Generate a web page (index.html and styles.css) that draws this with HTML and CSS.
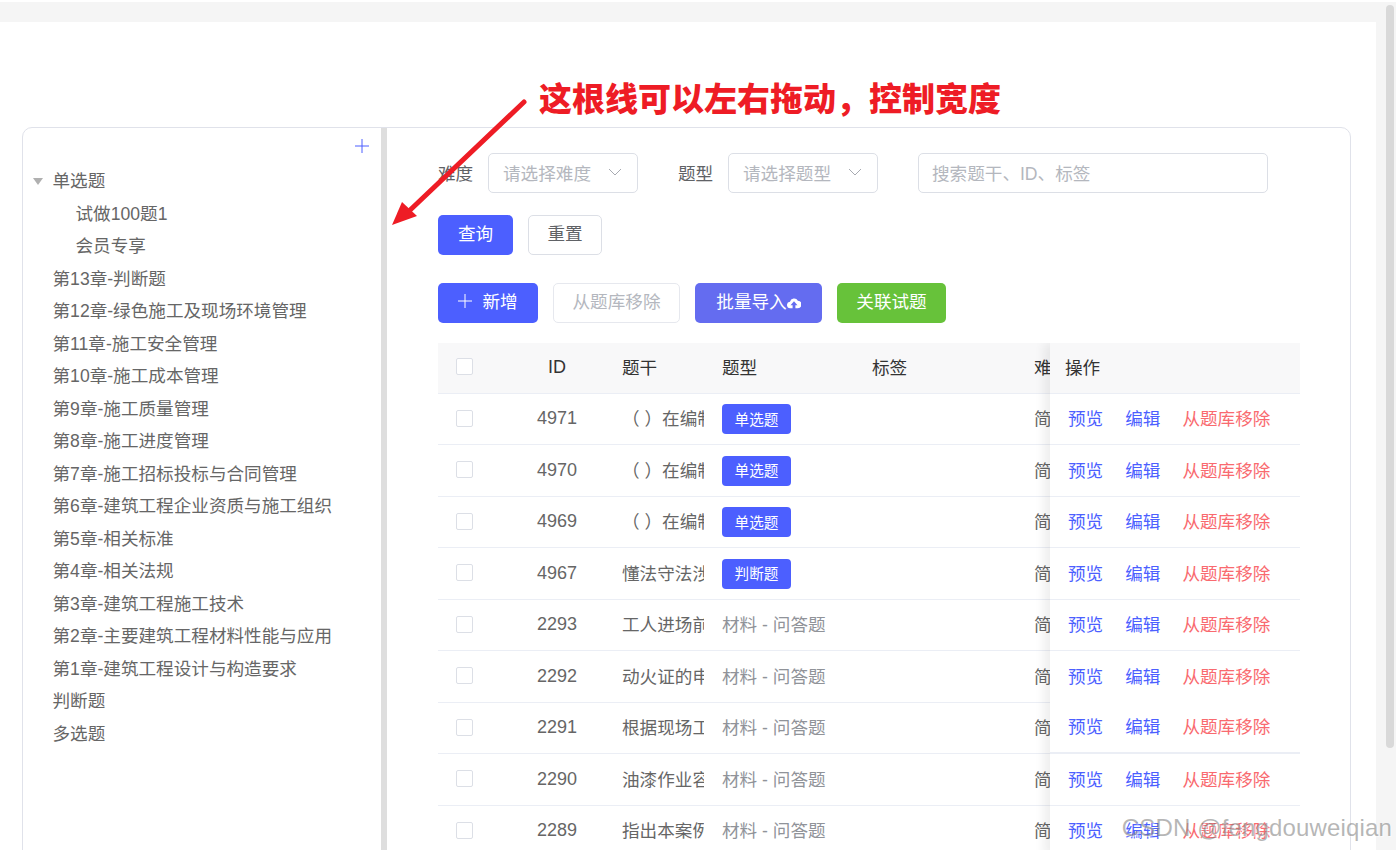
FILE: index.html
```html
<!DOCTYPE html>
<html lang="zh-CN">
<head>
    <meta charset="UTF-8">
    <title>题库管理</title>
    <link rel="stylesheet" href="styles.css">
</head>
<body>
    <div class="top-strip"></div>
    <div class="page">
        <div class="card">
            <div class="panel">
                <div class="tree">
                    <div class="tree-head">
                        <svg class="tree-add" width="16" height="16" viewBox="0 0 16 16"><path d="M8 1v14M1 8h14" stroke="#4c5fff" stroke-width="1" fill="none"/></svg>
                    </div>
                    <div class="tree-row"><span class="caret"></span>单选题</div>
                    <div class="tree-row child">试做100题1</div>
                    <div class="tree-row child">会员专享</div>
                    <div class="tree-row">第13章-判断题</div>
                    <div class="tree-row">第12章-绿色施工及现场环境管理</div>
                    <div class="tree-row">第11章-施工安全管理</div>
                    <div class="tree-row">第10章-施工成本管理</div>
                    <div class="tree-row">第9章-施工质量管理</div>
                    <div class="tree-row">第8章-施工进度管理</div>
                    <div class="tree-row">第7章-施工招标投标与合同管理</div>
                    <div class="tree-row">第6章-建筑工程企业资质与施工组织</div>
                    <div class="tree-row">第5章-相关标准</div>
                    <div class="tree-row">第4章-相关法规</div>
                    <div class="tree-row">第3章-建筑工程施工技术</div>
                    <div class="tree-row">第2章-主要建筑工程材料性能与应用</div>
                    <div class="tree-row">第1章-建筑工程设计与构造要求</div>
                    <div class="tree-row">判断题</div>
                    <div class="tree-row">多选题</div>
                </div>
                <div class="splitter"></div>
                <div class="content">
                    <div class="filters">
                        <div class="filter-item">
                            <label>难度</label>
                            <div class="select">
                                <span>请选择难度</span>
                                <svg width="14" height="14" viewBox="0 0 14 14"><path d="M1 4l6 6 6-6" stroke="#a8abb2" stroke-width="1" fill="none"/></svg>
                            </div>
                        </div>
                        <div class="filter-item">
                            <label>题型</label>
                            <div class="select">
                                <span>请选择题型</span>
                                <svg width="14" height="14" viewBox="0 0 14 14"><path d="M1 4l6 6 6-6" stroke="#a8abb2" stroke-width="1" fill="none"/></svg>
                            </div>
                        </div>
                        <div class="search">搜索题干、ID、标签</div>
                    </div>
                    <div class="btn-row query-row">
                        <button type="button" class="btn primary query">查询</button>
                        <button type="button" class="btn reset">重置</button>
                    </div>
                    <div class="btn-row action-row">
                        <button type="button" class="btn primary add">
                            <svg width="14" height="14" viewBox="0 0 14 14"><path d="M7 0v14M0 7h14" stroke="#fff" stroke-width="1" fill="none"/></svg>
                            新增
                        </button>
                        <button type="button" class="btn disabled">从题库移除</button>
                        <button type="button" class="btn import">批量导入<svg width="14" height="14" viewBox="0 0 16 16"><path fill="#fff" d="M4 14a3.700 3.700 0 0 1-.6-7.400A4.800 4.800 0 0 1 12.400 5.400 4.300 4.300 0 0 1 12 14H9.600v-3.400H12L8 6 4 10.600h2.400V14z"/></svg></button>
                        <button type="button" class="btn link-btn">关联试题</button>
                    </div>
                    <div class="table">
                        <div class="table-main">
                            <div class="row head">
                                <div class="cell check"><span class="box"></span></div>
                                <div class="cell id">ID</div>
                                <div class="cell stem">题干</div>
                                <div class="cell type">题型</div>
                                <div class="cell tags">标签</div>
                                <div class="cell level">难度</div>
                            </div>
                            <div class="row">
                                <div class="cell check"><span class="box"></span></div>
                                <div class="cell id">4971</div>
                                <div class="cell stem">（ ）在编制施工组织设计</div>
                                <div class="cell type has-tag"><span class="tag">单选题</span></div>
                                <div class="cell tags"></div>
                                <div class="cell level">简单</div>
                            </div>
                            <div class="row">
                                <div class="cell check"><span class="box"></span></div>
                                <div class="cell id">4970</div>
                                <div class="cell stem">（ ）在编制施工组织设计</div>
                                <div class="cell type has-tag"><span class="tag">单选题</span></div>
                                <div class="cell tags"></div>
                                <div class="cell level">简单</div>
                            </div>
                            <div class="row">
                                <div class="cell check"><span class="box"></span></div>
                                <div class="cell id">4969</div>
                                <div class="cell stem">（ ）在编制施工组织设计</div>
                                <div class="cell type has-tag"><span class="tag">单选题</span></div>
                                <div class="cell tags"></div>
                                <div class="cell level">简单</div>
                            </div>
                            <div class="row">
                                <div class="cell check"><span class="box"></span></div>
                                <div class="cell id">4967</div>
                                <div class="cell stem">懂法守法涉及内容</div>
                                <div class="cell type has-tag"><span class="tag">判断题</span></div>
                                <div class="cell tags"></div>
                                <div class="cell level">简单</div>
                            </div>
                            <div class="row">
                                <div class="cell check"><span class="box"></span></div>
                                <div class="cell id">2293</div>
                                <div class="cell stem">工人进场前应当</div>
                                <div class="cell type muted">材料 - 问答题</div>
                                <div class="cell tags"></div>
                                <div class="cell level">简单</div>
                            </div>
                            <div class="row">
                                <div class="cell check"><span class="box"></span></div>
                                <div class="cell id">2292</div>
                                <div class="cell stem">动火证的申请</div>
                                <div class="cell type muted">材料 - 问答题</div>
                                <div class="cell tags"></div>
                                <div class="cell level">简单</div>
                            </div>
                            <div class="row">
                                <div class="cell check"><span class="box"></span></div>
                                <div class="cell id">2291</div>
                                <div class="cell stem">根据现场工人</div>
                                <div class="cell type muted">材料 - 问答题</div>
                                <div class="cell tags"></div>
                                <div class="cell level">简单</div>
                            </div>
                            <div class="row">
                                <div class="cell check"><span class="box"></span></div>
                                <div class="cell id">2290</div>
                                <div class="cell stem">油漆作业容易</div>
                                <div class="cell type muted">材料 - 问答题</div>
                                <div class="cell tags"></div>
                                <div class="cell level">简单</div>
                            </div>
                            <div class="row">
                                <div class="cell check"><span class="box"></span></div>
                                <div class="cell id">2289</div>
                                <div class="cell stem">指出本案例中</div>
                                <div class="cell type muted">材料 - 问答题</div>
                                <div class="cell tags"></div>
                                <div class="cell level">简单</div>
                            </div>
                        </div>
                        <div class="table-fixed">
                            <div class="row head"><div class="cell op-head">操作</div></div>
                            <div class="row ops"><a>预览</a><a>编辑</a><a class="danger">从题库移除</a></div>
                            <div class="row ops"><a>预览</a><a>编辑</a><a class="danger">从题库移除</a></div>
                            <div class="row ops"><a>预览</a><a>编辑</a><a class="danger">从题库移除</a></div>
                            <div class="row ops"><a>预览</a><a>编辑</a><a class="danger">从题库移除</a></div>
                            <div class="row ops"><a>预览</a><a>编辑</a><a class="danger">从题库移除</a></div>
                            <div class="row ops no-line"><a>预览</a><a>编辑</a><a class="danger">从题库移除</a></div>
                            <div class="row ops thick-line"><a>预览</a><a>编辑</a><a class="danger">从题库移除</a></div>
                            <div class="row ops"><a>预览</a><a>编辑</a><a class="danger">从题库移除</a></div>
                            <div class="row ops"><a>预览</a><a>编辑</a><a class="danger">从题库移除</a></div>
                        </div>
                    </div>
                </div>
            </div>
        </div>
        <div class="scroll-track"><div class="scroll-thumb"></div></div>
    </div>

    <!-- annotation drawn over the screenshot -->
    <div class="note">这根线可以左右拖动，控制宽度</div>
    <svg class="note-arrow" width="150" height="140" viewBox="0 0 150 140">
        <path d="M139 7L22 118" stroke="#ee1c25" stroke-width="5" stroke-linecap="round" fill="none"/>
        <path d="M7 130L17 107L32 121z" fill="#ee1c25"/>
    </svg>
    <div class="watermark">CSDN @fengdouweiqian</div>
</body>
</html>
```

FILE: styles.css
```css
* {
    box-sizing: border-box;
}

html, body {
    height: 850px;
    overflow: hidden;
}

body {
    margin: 0;
    padding-top: 2px;
    background-color: #fff;
    font-family: "Liberation Sans", "Noto Sans CJK SC", sans-serif;
    font-size: 17.6px;
    color: #666;
    position: relative;
}

.top-strip {
    height: 20px;
    background-color: #f5f5f5;
}

.page {
    display: flex;
    height: 828px;
}

.card {
    width: 1376px;
    background-color: #fff;
    padding: 105px 25px 0 22px;
}

.scroll-track {
    width: 20px;
    margin-top: -20px;
    height: 848px;
    background-color: #f5f5f5;
    padding: 3px 2px 0 10px;
}

.scroll-thumb {
    height: 743px;
    background-color: #d9d9d9;
    border-radius: 4px;
}

.panel {
    display: flex;
    height: 760px;
    border: 1px solid #e0e2ea;
    border-radius: 10px;
}

/* left tree */
.tree {
    width: 358px;
    flex-shrink: 0;
}

.tree-head {
    height: 35.5px;
    display: flex;
    justify-content: flex-end;
    padding: 10px 11px 0 0;
}

.tree-row {
    height: 32.5px;
    display: flex;
    align-items: center;
    padding-left: 29.5px;
    position: relative;
    color: #666;
    white-space: nowrap;
}

.tree-row.child {
    padding-left: 52.5px;
}

.caret {
    position: absolute;
    left: 10px;
    top: 14px;
    border-left: 5px solid transparent;
    border-right: 5px solid transparent;
    border-top: 7px solid #b0b0b0;
}

.splitter {
    width: 6px;
    flex-shrink: 0;
    background-color: #dedede;
}

/* right side */
.content {
    flex: 1;
    min-width: 0;
    padding: 25px 50px 0 51px;
}

.filters {
    display: flex;
    gap: 40px;
    height: 40px;
}

.filter-item {
    display: flex;
    align-items: center;
    gap: 14px;
}

.filter-item label {
    width: 36px;
    padding-bottom: 2px;
    color: #606266;
    white-space: nowrap;
}

.select {
    width: 150px;
    height: 40px;
    display: flex;
    align-items: center;
    justify-content: space-between;
    padding: 0 15px 2px 14px;
    border: 1px solid #dcdfe6;
    border-radius: 5px;
    color: #b4b7be;
}

.search {
    width: 350px;
    height: 40px;
    display: flex;
    align-items: center;
    padding: 0 0 2px 13px;
    border: 1px solid #dcdfe6;
    border-radius: 5px;
    color: #b4b7be;
}

.btn-row {
    display: flex;
    gap: 15px;
    height: 40px;
}

.query-row {
    margin-top: 22px;
}

.action-row {
    margin-top: 28px;
}

.btn {
    height: 40px;
    padding: 0 0 5px;
    border: 1px solid transparent;
    border-radius: 5px;
    font-family: inherit;
    font-size: 17.6px;
    color: #fff;
    display: flex;
    align-items: center;
    justify-content: center;
    cursor: pointer;
}

.btn.primary {
    background-color: #4c5fff;
}

.query {
    width: 75px;
}

.reset {
    width: 74px;
    background-color: #fff;
    border-color: #dcdfe6;
    color: #606266;
}

.add {
    width: 100px;
    gap: 10px;
}

.disabled {
    width: 127px;
    background-color: #fff;
    border-color: #e6e8ee;
    color: #b4b7be;
}

.import {
    width: 127px;
    background-color: #646cf0;
}

.import svg {
    margin-top: 4px;
}

.link-btn {
    width: 109px;
    background-color: #67c23a;
}

/* table */
.table {
    display: flex;
    margin-top: 20px;
    width: 862px;
    overflow: hidden;
}

.table-main {
    flex: 1;
    min-width: 0;
    overflow: hidden;
}

.table-fixed {
    width: 250px;
    flex-shrink: 0;
    background-color: #fff;
    box-shadow: -6px 0 10px rgba(0, 0, 0, 0.07);
    position: relative;
}

.row {
    display: flex;
    height: 51.5px;
    align-items: center;
    border-bottom: 1px solid #ebeef5;
    white-space: nowrap;
}

.row.head {
    height: 50.75px;
    background-color: #f8f8f9;
    color: #333;
}

.cell {
    flex-shrink: 0;
    overflow: hidden;
    padding-bottom: 3px;
}

.check {
    width: 72px;
    padding-left: 18px;
    padding-bottom: 2px;
    display: flex;
}

.box {
    width: 17px;
    height: 17px;
    border: 1px solid #dcdfe6;
    border-radius: 2px;
    background-color: #fff;
}

.id {
    width: 94px;
    padding-bottom: 1px;
    font-size: 18px;
    text-align: center;
}

.stem {
    width: 100px;
    padding-left: 18px;
}

.type {
    width: 150px;
    padding-left: 18px;
}

.type.has-tag {
    padding-bottom: 0;
}

.tags {
    width: 162px;
    padding-left: 18px;
}

.level {
    width: 60px;
    padding-left: 18px;
}

.muted {
    color: #909399;
}

.tag {
    display: inline-flex;
    align-items: center;
    justify-content: center;
    width: 69px;
    height: 30px;
    padding-bottom: 2px;
    background-color: #4c5fff;
    border-radius: 4px;
    color: #fff;
    font-size: 14.6px;
}

.op-head {
    padding-left: 15px;
}

.ops {
    padding-left: 18px;
    padding-bottom: 3px;
    gap: 22px;
}

.ops a {
    color: #4c5fff;
}

.ops a.danger {
    color: #f96a6f;
}

.ops.no-line {
    border-bottom-color: transparent;
}

.ops.thick-line {
    padding-bottom: 5px;
    border-bottom-width: 2px;
}

/* annotation overlay */
.note {
    position: absolute;
    left: 539px;
    top: 76px;
    font-size: 33px;
    font-weight: 900;
    line-height: 48px;
    color: #ee1c25;
    white-space: nowrap;
}

.note-arrow {
    position: absolute;
    left: 385px;
    top: 95px;
}

.watermark {
    position: absolute;
    right: 4px;
    top: 814px;
    font-size: 24px;
    letter-spacing: 0.15px;
    color: rgba(110, 110, 110, 0.5);
    text-shadow: 1px 1px 1px rgba(255, 255, 255, 0.6);
    white-space: nowrap;
}
```
